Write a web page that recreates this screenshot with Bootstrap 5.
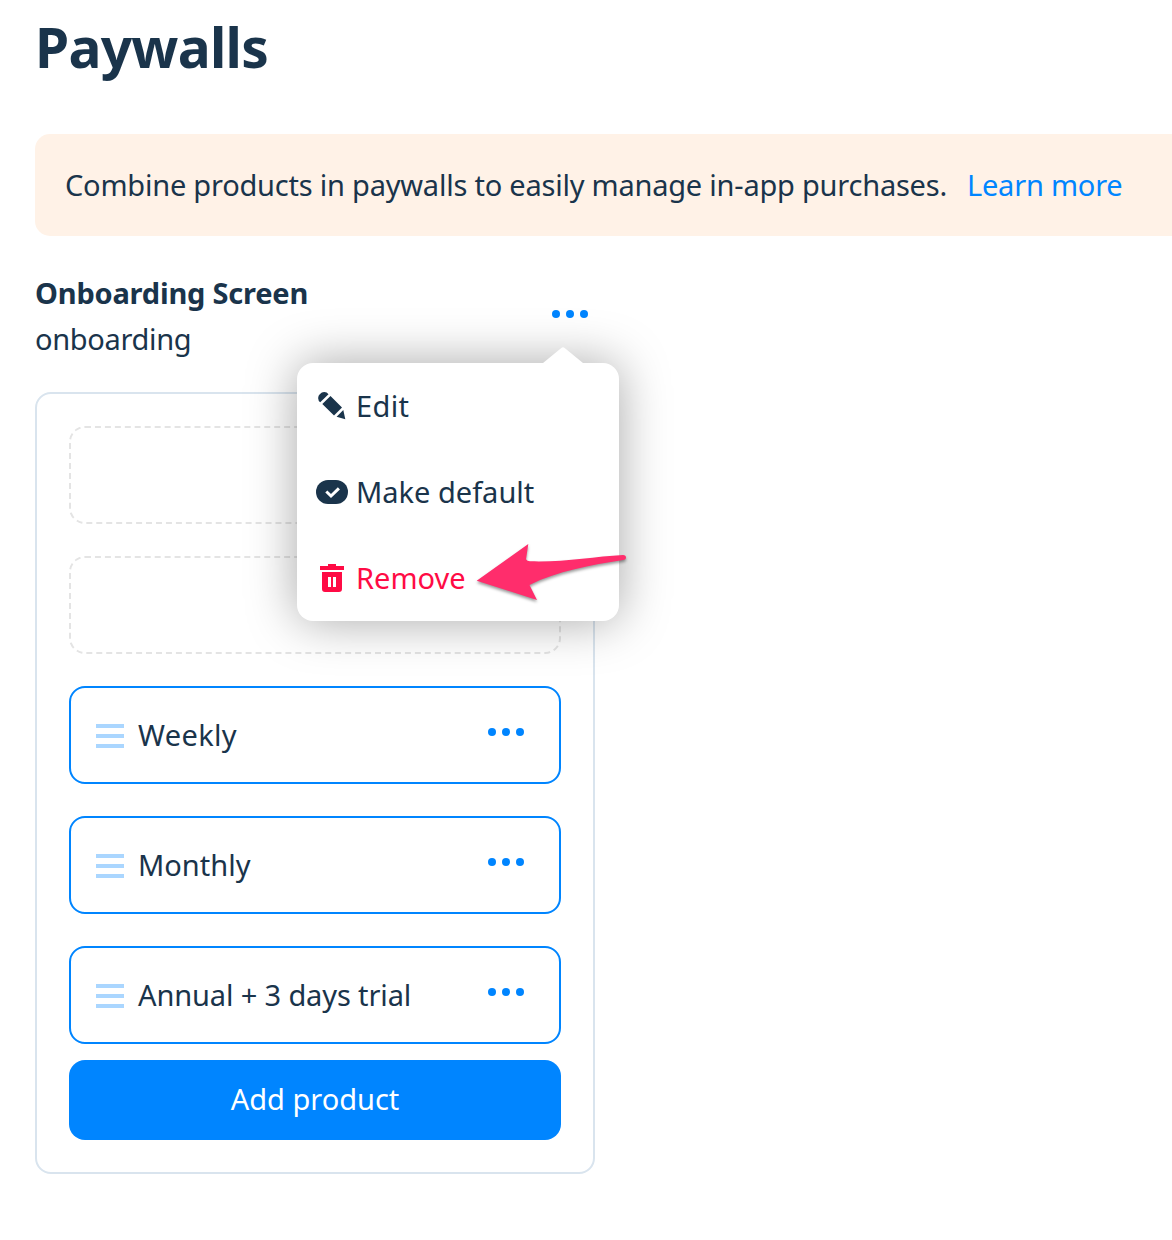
<!DOCTYPE html>
<html lang="en">
<head>
<meta charset="utf-8">
<meta name="viewport" content="width=device-width, initial-scale=1">
<title>Paywalls</title>
<link href="https://cdn.jsdelivr.net/npm/bootstrap@5.3.0/dist/css/bootstrap.min.css" rel="stylesheet">
<style>
  :root { --ink: #1a344b; --brand: #0085ff; --danger: #ff0b45; }
  body { font-family: "Noto Sans", sans-serif; font-size: 29px; line-height: 46px; color: var(--ink); background: #fff; overflow: hidden; }
  .page { padding: 15px 0 0 35px; }
  .page-title { font-size: 55px; line-height: 64px; margin-bottom: 55px; letter-spacing: -.72px; }
  .notice { background: #fff2e7; height: 102px; padding-left: 30px; border-radius: 15px 0 0 15px; margin-bottom: 34px; letter-spacing: -.22px; }
  .learn { color: var(--brand); margin-left: 20px; }
  .paywall { width: 560px; }
  .paywall-head { height: 92px; margin-bottom: 30px; }
  .paywall-name { letter-spacing: -.2px; }
  .paywall-id { letter-spacing: -.33px; }
  .head-dots { margin: 40px 7px 0 0; }
  .dots { fill: var(--brand); }
  .panel { border: 2px solid #d9e4ee; border-radius: 16px; padding: 32px; }
  .slot { height: 98px; border-radius: 16px; margin-bottom: 32px; }
  .slot-empty { border: 2px dashed #e4e4e4; }
  .slot-item { border: 2px solid var(--brand); padding: 0 35px 0 25px; }
  .slot-item .dots { margin-top: -6px; }
  .handle { margin: 2px 14px 0 0; }
  .fit-wide { letter-spacing: .35px; }
  .fit-tight { letter-spacing: -.13px; }
  .add { background: var(--brand); color: #fff; height: 80px; border-radius: 16px; margin-top: -16px; padding: 0 0 2px; font-size: inherit; line-height: 46px; border: 0; }
  .add:hover { background: #0078e6; color: #fff; }
  .menu { left: 262px; top: 93px; width: 322px; height: 258px; background: #fff; border-radius: 16px; box-shadow: 0 0 50px rgba(0,0,0,.35); z-index: 2; }
  .menu-arrow { left: 246px; top: -16px; }
  .menu-item { height: 86px; padding-left: 19px; color: var(--ink); }
  .menu-item svg { margin-right: 8px; }
  .menu-item.remove { color: var(--danger); }
  .pointer { left: 172px; top: 174px; filter: drop-shadow(0 2px 1.5px rgba(0,0,0,.4)); }
</style>
</head>
<body>
<svg class="d-none">
  <symbol id="dots" viewBox="0 0 36 8"><circle cx="4" cy="4" r="4"/><circle cx="18" cy="4" r="4"/><circle cx="32" cy="4" r="4"/></symbol>
  <symbol id="grip" viewBox="0 0 28 24"><path fill="#aad6ff" d="M0 0h28v4H0zM0 10h28v4H0zM0 20h28v4H0z"/></symbol>
</svg>
<main class="page">
  <h1 class="page-title fw-bold">Paywalls</h1>
  <div class="notice d-flex align-items-center text-nowrap">
    <span>Combine products in paywalls to easily manage in-app purchases.</span>
    <a href="#" class="learn text-decoration-none">Learn more</a>
  </div>
  <section class="paywall position-relative">
    <header class="paywall-head d-flex justify-content-between">
      <div>
        <div class="paywall-name fw-bold">Onboarding Screen</div>
        <div class="paywall-id">onboarding</div>
      </div>
      <svg class="dots head-dots" width="36" height="8"><use href="#dots"/></svg>
    </header>
    <div class="panel">
      <div class="slot slot-empty"></div>
      <div class="slot slot-empty"></div>
      <div class="slot slot-item d-flex align-items-center">
        <svg class="handle" width="28" height="24"><use href="#grip"/></svg><span class="fit-wide">Weekly</span>
        <svg class="dots ms-auto" width="36" height="8"><use href="#dots"/></svg>
      </div>
      <div class="slot slot-item d-flex align-items-center">
        <svg class="handle" width="28" height="24"><use href="#grip"/></svg><span>Monthly</span>
        <svg class="dots ms-auto" width="36" height="8"><use href="#dots"/></svg>
      </div>
      <div class="slot slot-item d-flex align-items-center">
        <svg class="handle" width="28" height="24"><use href="#grip"/></svg><span class="fit-tight">Annual + 3 days trial</span>
        <svg class="dots ms-auto" width="36" height="8"><use href="#dots"/></svg>
      </div>
      <button class="btn add w-100 d-block" type="button">Add product</button>
    </div>
    <div class="menu position-absolute">
      <svg class="menu-arrow position-absolute" width="40" height="17"><path fill="#fff" d="M0 16 18.300 1Q20 -.4 21.700 1L40 16v1H0z"/></svg>
      <a class="menu-item d-flex align-items-center text-decoration-none" href="#">
        <svg width="32" height="32" viewBox="0 0 32 32" fill="currentColor"><path d="M4.200 12.300A5.400 5.400 0 0 1 4 4 5.400 5.400 0 0 1 12.500 4.200zM6.300 14 14.500 6 26 17.600 18 25.600zM27.300 20 20.600 26.800 29.300 29.300z"/></svg><span class="fit-wide">Edit</span>
      </a>
      <a class="menu-item d-flex align-items-center text-decoration-none" href="#">
        <svg width="32" height="24" viewBox="0 0 32 24"><rect width="32" height="24" rx="12" fill="currentColor"/><path d="m10.300 11.500 4.700 4.500 7.900-7.600" fill="none" stroke="#fff" stroke-width="3"/></svg><span>Make default</span>
      </a>
      <a class="menu-item remove d-flex align-items-center text-decoration-none" href="#">
        <svg width="32" height="28" viewBox="0 0 32 28" fill="currentColor"><path d="M4 2h8V0h8v2h8v4H4zM6 8h20v17a3 3 0 0 1-3 3H9a3 3 0 0 1-3-3zm6 5v10h3V13zm5 0v10h3V13z" fill-rule="evenodd"/></svg><span>Remove</span>
      </a>
      <svg class="pointer position-absolute" width="164" height="72" viewBox="0 0 164 72"><path fill="#ff2d6c" d="M7.700 43.700 59.300 7 57 22.300Q58 24.300 61 24.300C94 25.500 125 19.500 154 18Q157 18.200 157 20.500 157 22.500 154 23C122 28 88 34 60.500 48L68 63z"/></svg>
    </div>
  </section>
</main>
<script src="https://cdn.jsdelivr.net/npm/bootstrap@5.3.0/dist/js/bootstrap.bundle.min.js"></script>
</body>
</html>
